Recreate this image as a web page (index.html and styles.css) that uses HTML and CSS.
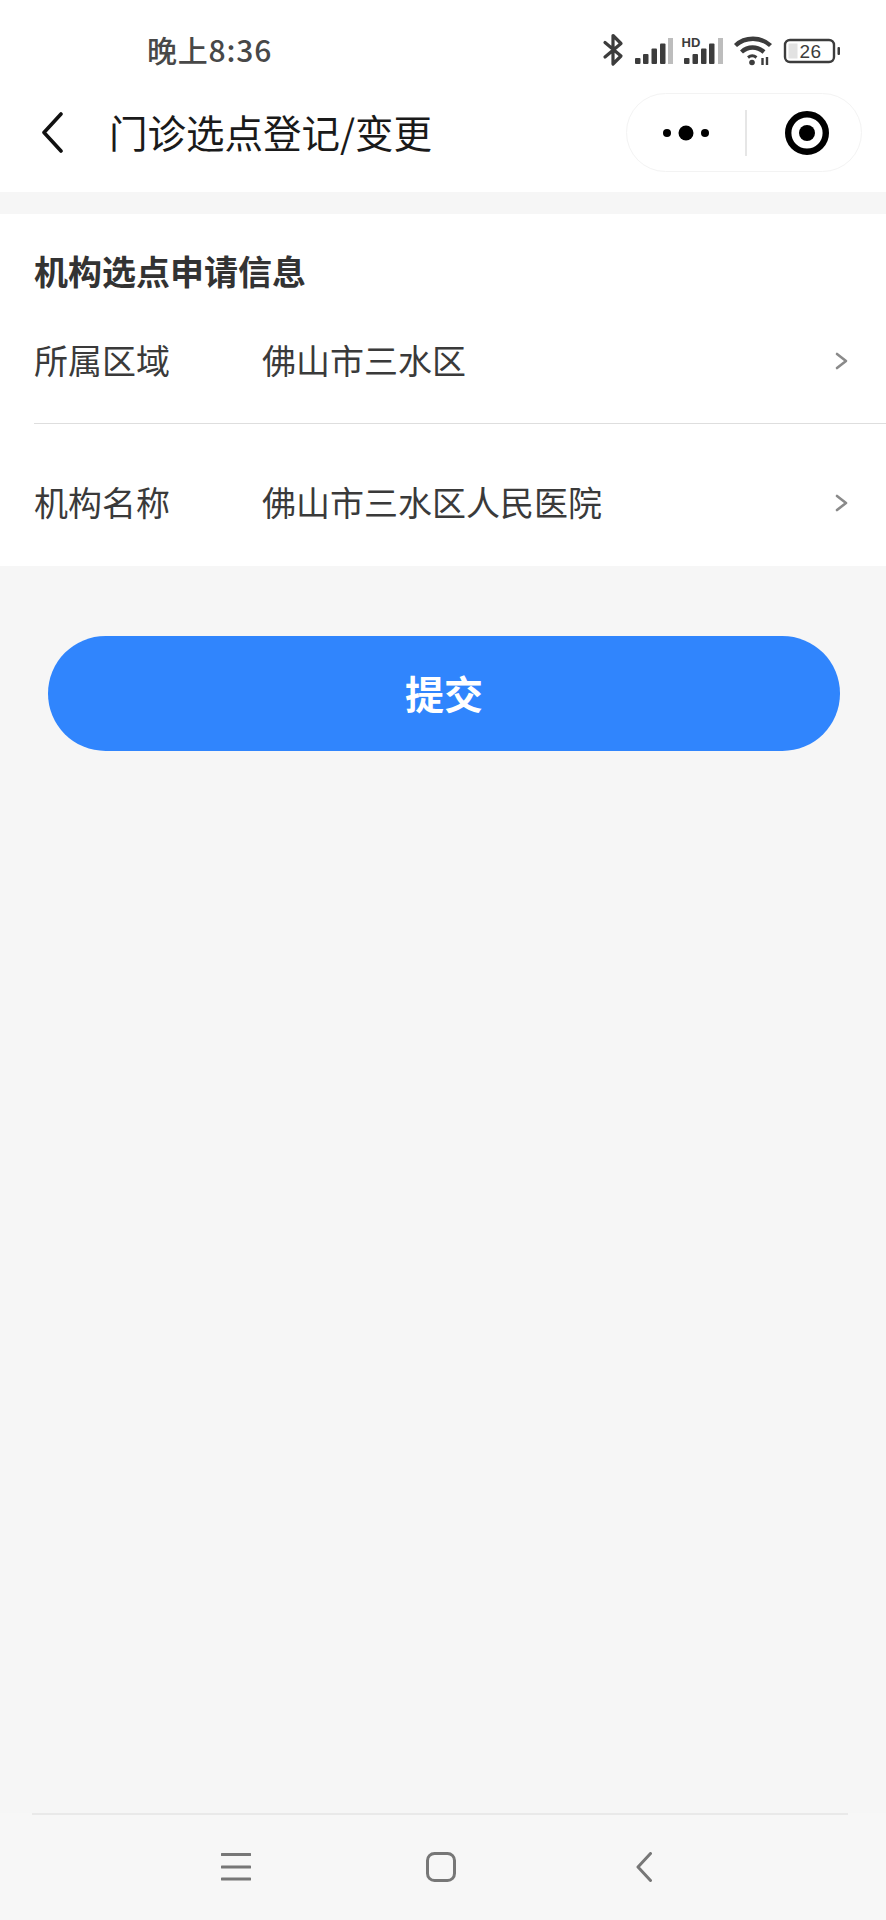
FILE: index.html
```html
<!DOCTYPE html>
<html lang="zh-CN">
<head>
<meta charset="utf-8">
<title>门诊选点登记/变更</title>
<link rel="stylesheet" href="styles.css">
</head>
<body>
<div class="app">
  <header class="top">
    <div class="status">
      <span class="time">晚上8:36</span>
      <svg class="status-icons" width="240" height="36" viewBox="600 32 240 36" aria-hidden="true">
        <!-- bluetooth -->
        <path d="M605 42.500 L621 56 L613 64 V35.500 L621 43.500 L605 57" class="ic-line"/>
        <!-- cell signal 1 -->
        <g class="ic-bar">
          <rect x="635" y="58" width="5.500" height="6" rx="1"/>
          <rect x="643" y="54" width="5.500" height="10" rx="1"/>
          <rect x="651.500" y="48.500" width="5.500" height="15.500" rx="1"/>
          <rect x="660" y="43.500" width="5.500" height="20.500" rx="1"/>
          <rect x="668" y="38" width="5" height="26" class="ic-dim"/>
        </g>
        <!-- cell signal 2 with HD mark -->
        <text x="681.500" y="47" class="ic-hd">HD</text>
        <g class="ic-bar">
          <rect x="684" y="58" width="5.500" height="6" rx="1"/>
          <rect x="692.500" y="54" width="5.500" height="10" rx="1"/>
          <rect x="701" y="48.500" width="5.500" height="15.500" rx="1"/>
          <rect x="709" y="43.500" width="5.500" height="20.500" rx="1"/>
          <rect x="718" y="38" width="5" height="26" class="ic-dim"/>
        </g>
        <!-- wifi -->
        <path d="M735.500 45.500 C745 36.500 761 36.500 770.500 45.500" class="ic-wifi"/>
        <path d="M741.500 52 C748 46 757 46 764 52" class="ic-wifi"/>
        <path d="M748 57.500 C750.500 55.500 754 55.500 756.500 57.500" class="ic-wifi-thin"/>
        <circle cx="752" cy="62.500" r="2.800" class="ic-fill"/>
        <path d="M762.500 58 V65 M767 57 V65" class="ic-thin"/>
        <!-- battery -->
        <rect x="785" y="40" width="49" height="22" rx="5" class="ic-batt"/>
        <rect x="788.500" y="43.500" width="9" height="15" class="ic-level"/>
        <text x="799.500" y="58" class="ic-pct">26</text>
        <rect x="837.500" y="47" width="2.500" height="8" rx="1" class="ic-fill"/>
      </svg>
    </div>
    <div class="titlebar">
      <svg class="back" width="22" height="42" viewBox="0 0 22 42" aria-hidden="true">
        <path d="M20 2 L3 20.500 L20 39"/>
      </svg>
      <h1 class="page-title">门诊选点登记/变更</h1>
      <div class="capsule">
        <svg class="capsule-more" width="48" height="16" viewBox="0 0 48 16" aria-hidden="true">
          <circle cx="5" cy="8" r="4"/>
          <circle cx="24" cy="8" r="7.500"/>
          <circle cx="43" cy="8" r="4"/>
        </svg>
        <span class="capsule-rule"></span>
        <svg class="capsule-target" width="44" height="44" viewBox="0 0 44 44" aria-hidden="true">
          <circle cx="22" cy="22" r="18.800" class="ring"/>
          <circle cx="22" cy="22" r="8"/>
        </svg>
      </div>
    </div>
  </header>

  <main class="content">
    <section class="card">
      <h2 class="card-title">机构选点申请信息</h2>
      <div class="row row-divided">
        <span class="row-label">所属区域</span>
        <span class="row-value">佛山市三水区</span>
        <svg class="chev" width="14" height="18" viewBox="0 0 14 18" aria-hidden="true"><path d="M2 2 L11 9 L2 16"/></svg>
      </div>
      <div class="row row-last">
        <span class="row-label">机构名称</span>
        <span class="row-value">佛山市三水区人民医院</span>
        <svg class="chev" width="14" height="18" viewBox="0 0 14 18" aria-hidden="true"><path d="M2 2 L11 9 L2 16"/></svg>
      </div>
    </section>
    <button class="submit" type="button">提交</button>
  </main>

  <footer class="navbar">
    <div class="nav-icons">
      <svg class="nav-menu" width="30" height="30" viewBox="0 0 30 30" aria-hidden="true"><path d="M1 2.500 H29 M1 15 H29 M1 27 H29"/></svg>
      <svg class="nav-home" width="30" height="30" viewBox="0 0 30 30" aria-hidden="true"><rect x="1.500" y="1.500" width="27" height="27" rx="7"/></svg>
      <svg class="nav-back" width="16" height="30" viewBox="0 0 16 30" aria-hidden="true"><path d="M14.500 1.500 L2 15 L14.500 28.500"/></svg>
    </div>
  </footer>
</div>
</body>
</html>
```

FILE: styles.css
```css
* { box-sizing: border-box; }

html, body { margin: 0; padding: 0; }

body {
  font-family: "Noto Sans CJK SC", "Noto Sans", sans-serif;
  color: #333;
  background: #f6f6f6;
}

.app {
  width: 886px;
  height: 1920px;
  display: flex;
  flex-direction: column;
  overflow: hidden;
  background: #f6f6f6;
}

/* status bar + title bar */
.top {
  height: 192px;
  background: #fff;
  display: flex;
  flex-direction: column;
}

.status {
  height: 93px;
  display: flex;
  align-items: flex-start;
  justify-content: space-between;
  padding: 32px 46px 0 147px;
}

.time {
  font-size: 30px;
  line-height: 34px;
  letter-spacing: 0.8px;
  color: #484848;
  font-weight: 500;
}

.ic-line { fill: none; stroke: #3c3c3c; stroke-width: 3.200; stroke-linejoin: round; stroke-linecap: round; }
.ic-bar { fill: #3c3c3c; }
.ic-dim { fill: #bdbdbd; }
.ic-hd { font-family: "Liberation Sans", sans-serif; font-size: 13px; font-weight: 700; fill: #3c3c3c; }
.ic-wifi { fill: none; stroke: #3c3c3c; stroke-width: 4.400; }
.ic-wifi-thin { fill: none; stroke: #3c3c3c; stroke-width: 3; }
.ic-thin { fill: none; stroke: #3c3c3c; stroke-width: 2.400; }
.ic-fill { fill: #3c3c3c; }
.ic-batt { fill: none; stroke: #3c3c3c; stroke-width: 2.400; }
.ic-level { fill: #e2e2e2; }
.ic-pct { font-family: "Liberation Sans", sans-serif; font-size: 19px; fill: #3c3c3c; letter-spacing: 0.500px; }

.titlebar {
  height: 79px;
  display: flex;
  align-items: center;
  padding-left: 41px;
}

.back path {
  fill: none;
  stroke: #111;
  stroke-width: 3.600;
  stroke-linecap: round;
  stroke-linejoin: round;
}

.page-title {
  margin: 0 0 4px 46px;
  font-size: 38.500px;
  line-height: 52px;
  font-weight: 400;
  color: #1a1a1a;
  white-space: nowrap;
}

.capsule {
  margin-left: auto;
  margin-right: 24px;
  width: 236px;
  height: 79px;
  border: 1px solid #f3f3f3;
  border-radius: 40px;
  display: flex;
  align-items: center;
  padding-left: 35px;
}

.capsule-more circle { fill: #000; }

.capsule-rule {
  width: 2px;
  height: 46px;
  margin-left: 35px;
  background: #e6e6e6;
}

.capsule-target { margin-left: 38px; fill: #000; }
.capsule-target .ring { fill: none; stroke: #000; stroke-width: 6.400; }

/* form card */
.content {
  flex: 1;
  padding-top: 22px;
}

.card {
  background: #fff;
  height: 352px;
  padding-top: 33px;
}

.card-title {
  margin: 0 0 4px 34px;
  font-size: 34px;
  line-height: 48px;
  font-weight: 700;
  color: #333;
}

.row {
  margin-left: 34px;
  display: flex;
  align-items: center;
  padding: 37px 37px 39px 0;
  font-size: 34px;
  line-height: 48px;
  color: #3a3a3a;
}

.row-divided {
  height: 125px;
  border-bottom: 1px solid #dedede;
}

.row-last { margin-top: 17px; }

.row-label { width: 228px; flex: none; }

.row-value { flex: 1; }

.chev { flex: none; margin-top: 2px; }

.chev path {
  fill: none;
  stroke: #8a8a8a;
  stroke-width: 2.600;
  stroke-linejoin: round;
  stroke-linecap: round;
}

.submit {
  display: block;
  width: 792px;
  height: 115px;
  margin: 70px 0 0 48px;
  padding: 0 0 4px;
  border: 0;
  border-radius: 58px;
  background: #3085fd;
  color: #fff;
  font-family: inherit;
  font-size: 39px;
  font-weight: 700;
}

/* system navigation bar */
.navbar {
  height: 107px;
  background: #f7f7f7;
  display: flex;
  flex-direction: column;
}

.navbar::before {
  content: "";
  height: 2px;
  margin: 0 38px 0 32px;
  background: #e9e9e9;
}

.nav-icons {
  display: flex;
  align-items: flex-start;
  padding: 37px 0 0 221px;
}

.nav-icons svg { flex: none; fill: none; stroke: #777; stroke-width: 3; stroke-linecap: round; stroke-linejoin: round; }

.nav-home { margin-left: 175px; }
.nav-back { margin-left: 180px; }
```
